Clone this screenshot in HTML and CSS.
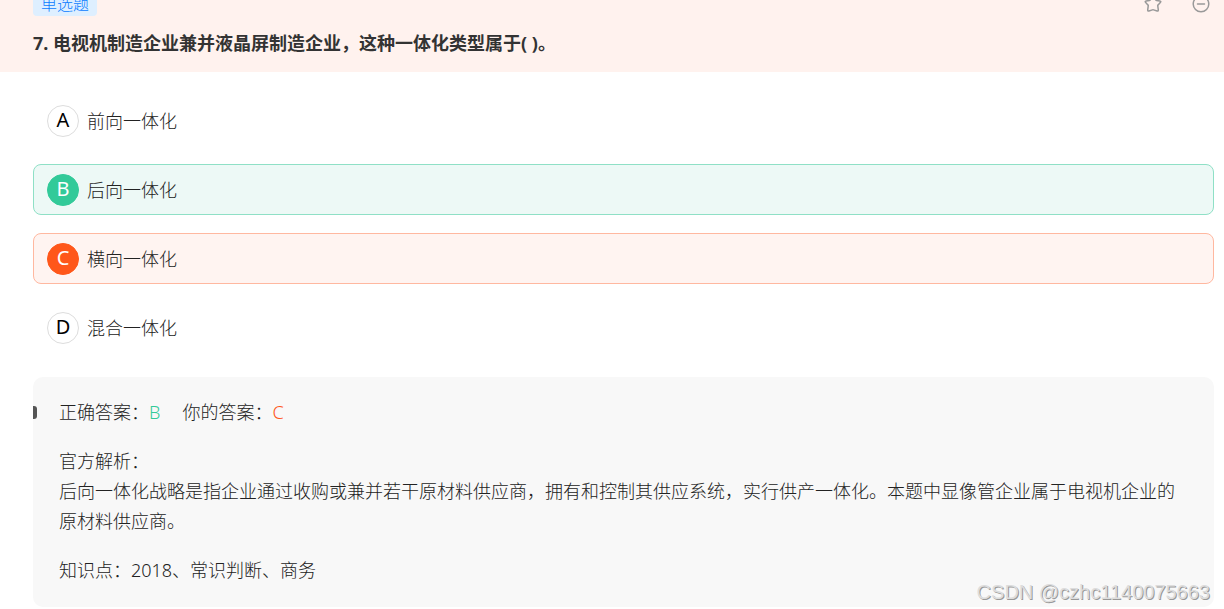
FILE: index.html
```
<!DOCTYPE html>
<html lang="zh-CN">
<head>
    <meta charset="UTF-8">
    <meta name="viewport" content="width=device-width, initial-scale=1.0">
    <title>单选题</title>
    <link rel="stylesheet" href="styles.css">
</head>
<body>
    <header class="question">
        <div class="question-bar">
            <span class="tag">单选题</span>
            <div class="actions">
                <button class="icon-btn" type="button" aria-label="收藏">
                    <svg width="20" height="20" viewBox="0 0 20 20">
                        <path d="M9.1 2.6Q10 1 10.9 2.6L12.5 5.7Q12.8 6.3 13.5 6.4L16.8 6.9Q18.5 7.2 17.3 8.5L15.1 10.9Q14.6 11.4 14.8 12.1L15.3 15.9Q15.4 17.3 14.1 17L10.6 15.9Q10 15.7 9.4 15.9L5.9 17Q4.6 17.3 4.7 15.9L5.2 12.1Q5.4 11.4 4.9 10.9L2.7 8.5Q1.5 7.2 3.2 6.9L6.5 6.4Q7.2 6.3 7.5 5.7Z"/>
                    </svg>
                </button>
                <button class="icon-btn" type="button" aria-label="移除">
                    <svg width="20" height="20" viewBox="0 0 20 20">
                        <circle cx="10" cy="10" r="7.8"/>
                        <path d="M6.5 10h7"/>
                    </svg>
                </button>
            </div>
        </div>
        <h1 class="title">7. 电视机制造企业兼并液晶屏制造企业，这种一体化类型属于( )。</h1>
    </header>

    <main class="content">
        <form class="options">
            <label class="option">
                <input type="radio" name="answer" value="A">
                <span class="letter">A</span>前向一体化
            </label>
            <label class="option correct">
                <input type="radio" name="answer" value="B">
                <span class="letter">B</span>后向一体化
            </label>
            <label class="option wrong">
                <input type="radio" name="answer" value="C" checked>
                <span class="letter">C</span>横向一体化
            </label>
            <label class="option">
                <input type="radio" name="answer" value="D">
                <span class="letter">D</span>混合一体化
            </label>
        </form>

        <section class="analysis">
            <div class="answers">
                <p>正确答案：<span class="green">B</span></p>
                <p>你的答案：<span class="orange">C</span></p>
            </div>
            <div>
                <p>官方解析：</p>
                <p>后向一体化战略是指企业通过收购或兼并若干原材料供应商，拥有和控制其供应系统，实行供产一体化。本题中显像管企业属于电视机企业的原材料供应商。</p>
            </div>
            <p>知识点：2018、常识判断、商务</p>
        </section>
    </main>

    <div class="watermark">CSDN @czhc1140075663</div>
</body>
</html>
```
FILE: styles.css
```
* {
    margin: 0;
    padding: 0;
    box-sizing: border-box;
}
body {
    position: relative;
    font-family: "Noto Sans", "Noto Sans CJK SC", sans-serif;
    font-size: 18px;
    font-weight: 300;
    line-height: 30px;
    color: #222;
    background: #fff;
}

/* question header */
.question {
    padding: 0 10px 14px 33px;
    background: #fff2ee;
    overflow: hidden;
}
.question-bar {
    display: flex;
    justify-content: space-between;
    align-items: center;
    height: 24px;
    margin-top: -8px;
    margin-bottom: 12px;
}
.tag {
    padding: 0 8px;
    border-radius: 4px;
    background: #deefff;
    color: #0a7cff;
    font-size: 16px;
    line-height: 24px;
}
.actions {
    display: flex;
    gap: 28px;
    padding-right: 3px;
}
.icon-btn {
    display: flex;
    border: none;
    background: none;
    cursor: pointer;
}
.icon-btn svg {
    fill: none;
    stroke: #999;
    stroke-width: 1.5;
    stroke-linecap: round;
    stroke-linejoin: round;
}
.title {
    font-size: 18px;
    font-weight: bold;
    line-height: 30px;
    color: #333;
}

/* options */
.content {
    padding: 23px 10px 2px 33px;
}
.options {
    display: flex;
    flex-direction: column;
    gap: 18px;
    margin-bottom: 24px;
}
.option {
    display: flex;
    align-items: center;
    height: 51px;
    padding: 0 13px;
    border: 1px solid transparent;
    border-radius: 8px;
    cursor: pointer;
}
.option input {
    position: absolute;
    opacity: 0;
}
.letter {
    width: 32px;
    height: 32px;
    margin-right: 8px;
    border: 1px solid #ddd;
    border-radius: 50%;
    color: #000;
    font-size: 20px;
    font-weight: 400;
    line-height: 28px;
    text-align: center;
}
.correct {
    border-color: #8fe0c6;
    background: #edf9f6;
}
.correct .letter {
    border-color: #32ca99;
    background: #32ca99;
    color: #fff;
}
.wrong {
    border-color: #ffb8a0;
    background: #fff4f1;
}
.wrong .letter {
    border-color: #ff571a;
    background: #ff571a;
    color: #fff;
}

/* analysis */
.analysis {
    display: flex;
    flex-direction: column;
    gap: 19px;
    padding: 20px 26px 22px;
    border-radius: 10px;
    background: #f8f8f8;
}
.answers {
    display: flex;
    align-items: center;
    gap: 22px;
}
.answers::before {
    content: "";
    width: 4px;
    height: 13px;
    margin-left: -26px;
    border-radius: 0 3px 3px 0;
    background: #555;
}
.green {
    color: #32ca99;
}
.orange {
    color: #ff571a;
}

.watermark {
    position: absolute;
    right: 14px;
    bottom: 2px;
    font-family: "Liberation Sans", sans-serif;
    font-size: 20px;
    line-height: 30px;
    color: #ddd;
    text-shadow: 1px 1px 0 #999;
}
```
